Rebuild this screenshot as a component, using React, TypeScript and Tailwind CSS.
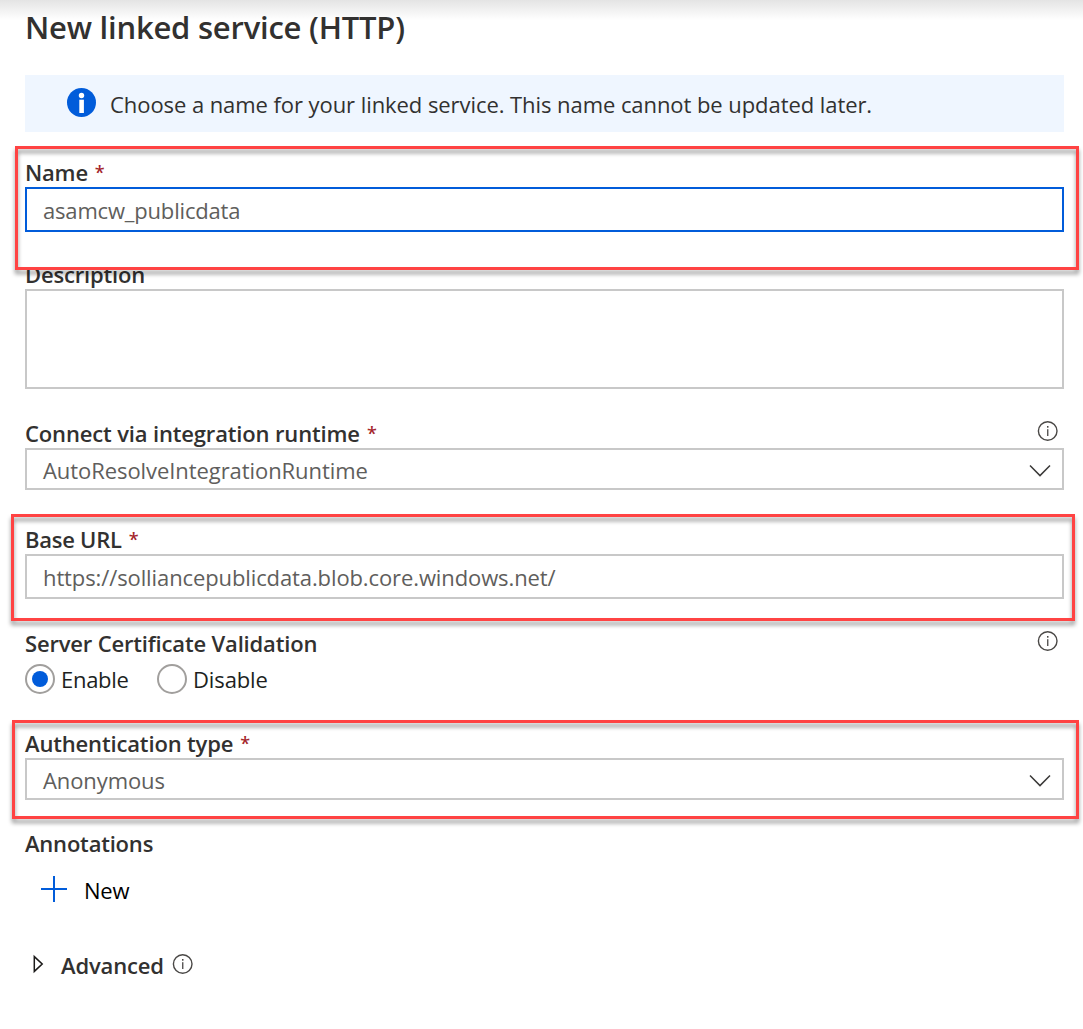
import React from "react";

function InfoIcon({ className = "" }: { className?: string }) {
  return (
    <svg className={className} width="22" height="22" viewBox="0 0 22 22" fill="none">
      <circle cx="10.7" cy="11" r="9.3" stroke="#4a4846" strokeWidth="1.4" />
      <rect x="10" y="6" width="1.5" height="1.7" fill="#4a4846" />
      <rect x="10.1" y="9.2" width="1.3" height="6.8" fill="#4a4846" />
    </svg>
  );
}

function Label({ children, spacing, required }: { children: string; spacing: string; required?: boolean }) {
  return (
    <div className="flex h-[30px] font-semibold leading-[30px] text-[#323130] whitespace-pre">
      <span className={spacing}>{children}</span>
      {required && <span className="ml-[7px] h-[30px] text-[18px] leading-[30px] font-medium font-['Noto_Sans',sans-serif] text-[#a4262c]">*</span>}
    </div>
  );
}

function TextField({ value, spacing, focused }: { value: string; spacing: string; focused?: boolean }) {
  return (
    <div className={`h-[45px] border-2 pt-[6px] pl-[16px] leading-[30px] text-[#605e5c] ${focused ? "border-[#015cda]" : "border-[#c8c8c8]"}`}>
      <span className={spacing}>{value}</span>
    </div>
  );
}

function Select({ value, spacing }: { value: string; spacing: string }) {
  return (
    <div className="flex h-[42px] justify-between border-2 border-[#c8c8c8] pt-[5px] pl-[16px] pr-[11px] leading-[30px] text-[#605e5c]">
      <span className={spacing}>{value}</span>
      <svg className="mt-[8px]" width="22" height="16" viewBox="0 0 22 16" fill="none">
        <path d="M1 2.5 L11 12.6 L21 2.5" stroke="#3b3a39" strokeWidth="1.5" />
      </svg>
    </div>
  );
}

function Radio({ label, checked, spacing }: { label: string; checked?: boolean; spacing: string }) {
  return (
    <div className="flex h-[30px] text-[#201f1e]">
      <span className="flex size-[30px] items-center justify-center rounded-full border-2 border-[#a19f9d]">
        {checked && <span className="size-4 rounded-full bg-[#015cda]" />}
      </span>
      <span className={`ml-[6px] leading-[30px] ${spacing}`}>{label}</span>
    </div>
  );
}

function Highlight({ className }: { className: string }) {
  return (
    <div
      className={`pointer-events-none absolute border-[3px] border-[#ff4343] [filter:drop-shadow(0_4px_2px_rgba(0,0,0,0.42))] ${className}`}
    />
  );
}

export default function App() {
  return (
    <main className="relative h-[1029px] w-[1083px] overflow-hidden bg-white font-['Open_Sans',sans-serif] text-[22px]">
      <div className="flex h-full flex-col bg-linear-to-b from-[#e4e4e4] to-white bg-[length:100%_20px] bg-no-repeat pl-[25px] pr-[19px] pt-[6px]">
        <h1 className="h-[42px] text-[31px] font-semibold leading-[42px] tracking-[-0.22px] text-[#323130]">
          New linked service (HTTP)
        </h1>

        <div className="mt-[27px] flex h-[57px] bg-[#eff6ff] pl-[42px] pt-[13px]">
          <svg width="29" height="29" viewBox="0 0 29 29">
            <circle cx="14.5" cy="14.5" r="14.5" fill="#015cda" />
            <circle cx="14.5" cy="7.5" r="2.7" fill="#fff" />
            <rect x="12.3" y="11.7" width="4.6" height="13.3" fill="#fff" />
          </svg>
          <span className="ml-[14px] mt-px h-[30px] leading-[30px] tracking-[-0.068px] text-[#323130]">
            Choose a name for your linked service. This name cannot be updated later.
          </span>
        </div>

        <section className="mt-[25px]">
          <Label spacing="tracking-[-0.2px]" required>Name</Label>
          <TextField value="asamcw_publicdata" spacing="tracking-[-0.18px]" focused />
        </section>

        <section className="mt-[27px]">
          <Label spacing="tracking-[-0.18px]">Description</Label>
          <div className="h-[100px] border-2 border-[#c8c8c8]" />
        </section>

        <section className="mt-[29px]">
          <div className="flex justify-between">
            <Label spacing="tracking-[-0.15px]" required>Connect via integration runtime</Label>
            <InfoIcon className="mr-[5px] mt-[2px]" />
          </div>
          <Select value="AutoResolveIntegrationRuntime" spacing="tracking-[-0.07px]" />
        </section>

        <section className="mt-[34px]">
          <Label spacing="tracking-[-0.25px]" required>Base URL</Label>
          <TextField value="https://solliancepublicdata.blob.core.windows.net/" spacing="tracking-[-0.108px]" />
        </section>

        <section className="mt-[29px]">
          <div className="flex justify-between">
            <Label spacing="tracking-[-0.17px]">Server Certificate Validation</Label>
            <InfoIcon className="mr-[5px] mt-[2px]" />
          </div>
          <div className="mt-[6px] flex">
            <div className="w-[132px]">
              <Radio label="Enable" spacing="tracking-[-0.29px]" checked />
            </div>
            <Radio label="Disable" spacing="tracking-[-0.12px]" />
          </div>
        </section>

        <section className="mt-[34px]">
          <Label spacing="tracking-[-0.15px]" required>Authentication type</Label>
          <Select value="Anonymous" spacing="tracking-[-0.09px]" />
        </section>

        <section className="mt-[28px]">
          <Label spacing="tracking-[-0.2px]">Annotations</Label>
          <div className="mt-[17px] flex h-[30px] pl-[16px] leading-[30px] text-black">
            <svg className="mt-px" width="26" height="26" viewBox="0 0 26 26">
              <path d="M13 0V26M0 13H26" stroke="#015cda" strokeWidth="2" />
            </svg>
            <span className="ml-[17px] tracking-[-0.2px]">New</span>
          </div>
        </section>

        <div className="mt-[45px] flex h-[30px] pl-[7px]">
          <svg className="mt-[4px]" width="13" height="20" viewBox="0 0 13 20" fill="none">
            <path d="M2.3 2.6V17.4L10.2 10Z" stroke="#1b1a19" strokeWidth="1.5" />
          </svg>
          <div className="ml-[16px] w-[102px]">
            <Label spacing="tracking-[-0.15px]">Advanced</Label>
          </div>
          <InfoIcon className="ml-[9px] mt-[3px]" />
        </div>
      </div>

      <Highlight className="left-[15px] top-[146px] h-[124px] w-[1064px]" />
      <Highlight className="left-[11px] top-[514px] h-[107px] w-[1064px]" />
      <Highlight className="left-[12px] top-[720px] h-[99px] w-[1067px]" />
    </main>
  );
}
